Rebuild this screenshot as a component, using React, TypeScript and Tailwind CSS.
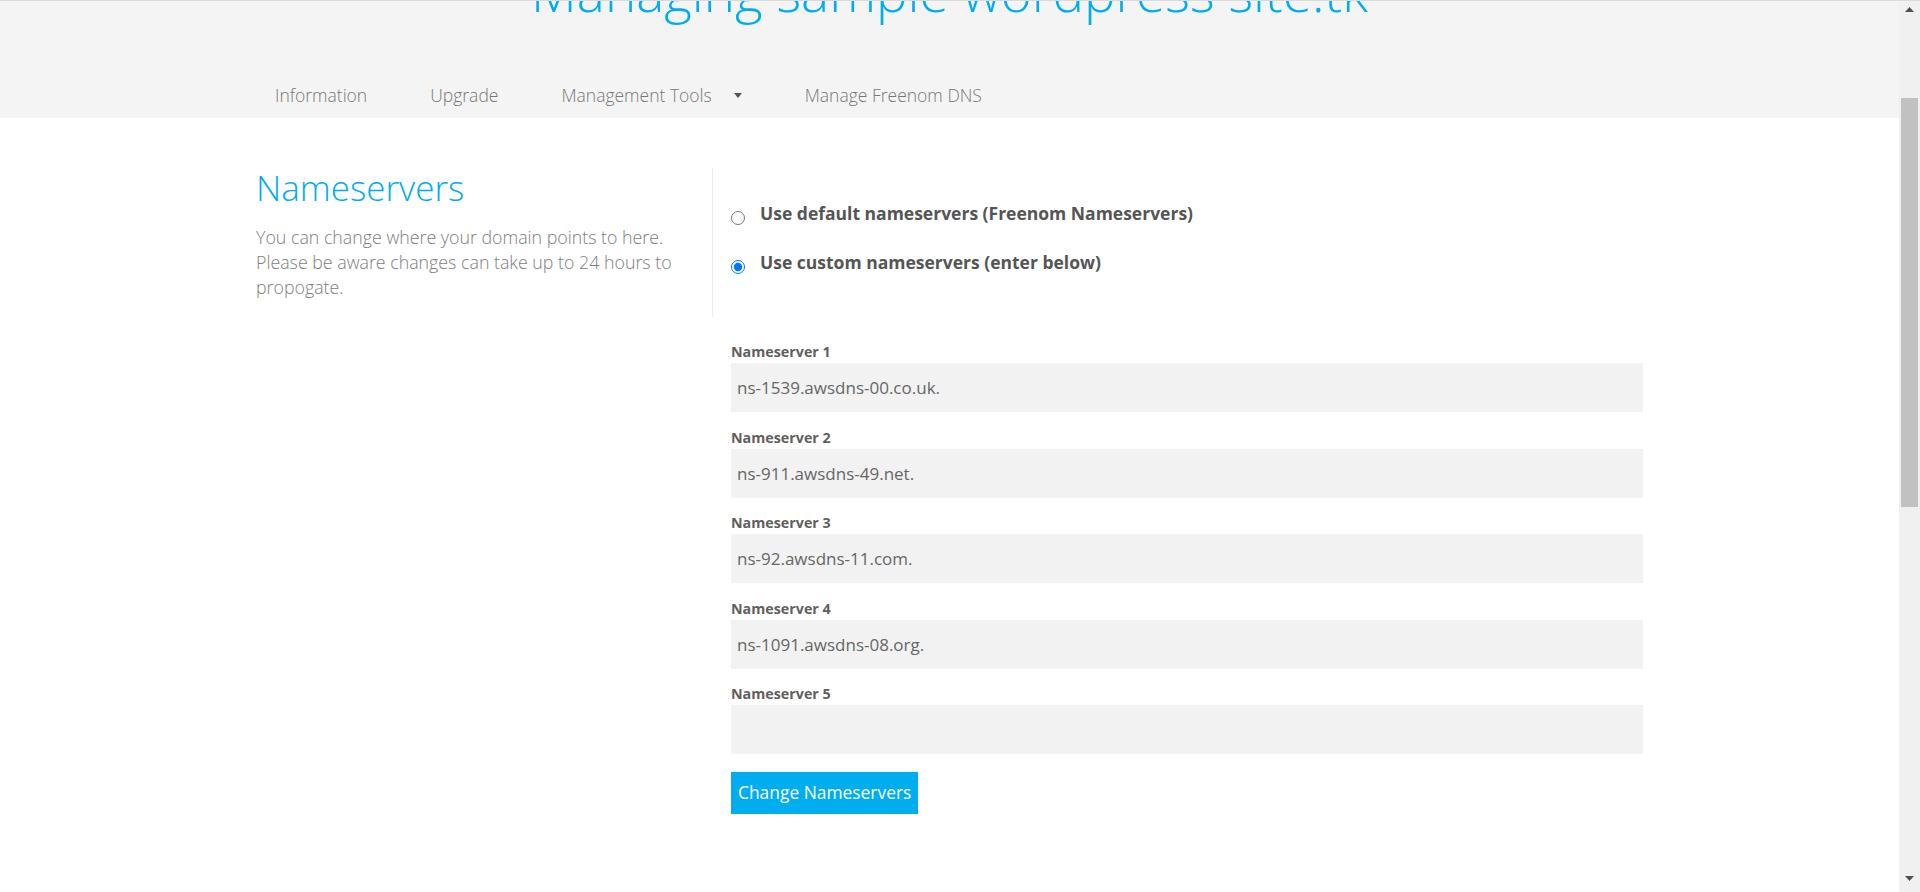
import { ChangeEvent } from 'react'

const navItems = ['Information', 'Upgrade', 'Management Tools', 'Manage Freenom DNS']

const nameservers = [
    'ns-1539.awsdns-00.co.uk.',
    'ns-911.awsdns-49.net.',
    'ns-92.awsdns-11.com.',
    'ns-1091.awsdns-08.org.',
    '',
]

function Caret() {
    return (
        <svg width="8" height="5" viewBox="0 0 8 5" className="fill-[#555]">
            <path d="M0 0h8L4 5z" />
        </svg>
    )
}

function Scrollbar() {
    return (
        <div className="flex h-full w-[21px] shrink-0 flex-col items-center bg-[#f0f0f0]">
            <div className="flex h-[17px] items-center justify-center">
                <svg width="9" height="5" viewBox="0 0 9 5" className="fill-[#505050]">
                    <path d="M4.5 0L9 5H0z" />
                </svg>
            </div>
            <div className="mt-[80px] h-[409px] w-[17px] bg-[#c1c1c1]" />
            <div className="flex-1" />
            <div className="flex h-[22px] items-start justify-center pt-[6px]">
                <svg width="9" height="5" viewBox="0 0 9 5" className="fill-[#505050]">
                    <path d="M0 0h9L4.5 5z" />
                </svg>
            </div>
        </div>
    )
}

function RadioRow({ label, checked }: { label: string; checked: boolean }) {
    return (
        <label className="flex items-start gap-[15px]">
            <input
                type="radio"
                name="nstype"
                defaultChecked={checked}
                className="m-0 mt-[10px] h-[14px] w-[14px] shrink-0"
            />
            <span className="text-[17.5px] leading-[24px] font-bold text-[#555]">
                {label}
            </span>
        </label>
    )
}

export default function App() {
    const noop = (_e: ChangeEvent<HTMLInputElement>) => {}

    return (
        <div className="flex h-[892px] w-full flex-col overflow-hidden bg-white font-['Open_Sans',sans-serif]">
            <div className="h-px w-full shrink-0 bg-[#dadada]" />
            <div className="flex min-h-0 flex-1">
                <div className="min-w-0 flex-1 overflow-hidden">
                    <header className="bg-[#f4f4f4] pb-[11px]">
                        <div className="mx-auto w-[1387px]">
                            <h1 className="-mt-[35px] text-center text-[53px] leading-[52px] font-light text-[#00adef]">
                                Managing sample wordpress site.tk
                            </h1>
                            <nav className="mt-[65px] flex items-center gap-[63px] pl-[19px] text-[17.5px] leading-[24px] font-light text-[#777]">
                                {navItems.map((item) =>
                                    item === 'Management Tools' ? (
                                        <span key={item} className="flex items-center gap-[22px]">
                                            {item}
                                            <Caret />
                                        </span>
                                    ) : (
                                        <span key={item}>{item}</span>
                                    ),
                                )}
                            </nav>
                        </div>
                    </header>

                    <main className="mx-auto flex w-[1387px] items-start pt-[50px]">
                        <div className="w-[457px] shrink-0 border-r border-[#ececec] pb-[17px]">
                            <h2 className="text-[35px] leading-[40px] font-light text-[#00adef]">
                                Nameservers
                            </h2>
                            <p className="mt-[17px] w-[430px] text-[17.8px] leading-[25px] font-light text-[#7d7d7d]">
                                You can change where your domain points to here. Please be aware
                                changes can take up to 24 hours to propogate.
                            </p>
                        </div>

                        <div className="min-w-0 flex-1 pl-[18px]">
                            <div className="flex flex-col gap-[25px] pt-[33px]">
                                <RadioRow label="Use default nameservers (Freenom Nameservers)" checked={false} />
                                <RadioRow label="Use custom nameservers (enter below)" checked />
                            </div>

                            <form className="mt-[67px]">
                                {nameservers.map((ns, i) => (
                                    <div key={i} className="mb-[14.5px]">
                                        <label className="mb-px block text-[14.3px] leading-[21px] font-bold text-[#5f5f5f]">
                                            Nameserver {i + 1}
                                        </label>
                                        <input
                                            type="text"
                                            value={ns}
                                            onChange={noop}
                                            className="block h-[49px] w-full border-0 bg-[#f2f2f2] px-[6px] text-[17px] text-[#666] outline-none"
                                        />
                                    </div>
                                ))}
                                <button
                                    type="button"
                                    className="mt-[3px] h-[42px] bg-[#00adef] px-[7px] text-[17.4px] text-white"
                                >
                                    Change Nameservers
                                </button>
                            </form>
                        </div>
                    </main>
                </div>
                <Scrollbar />
            </div>
        </div>
    )
}
